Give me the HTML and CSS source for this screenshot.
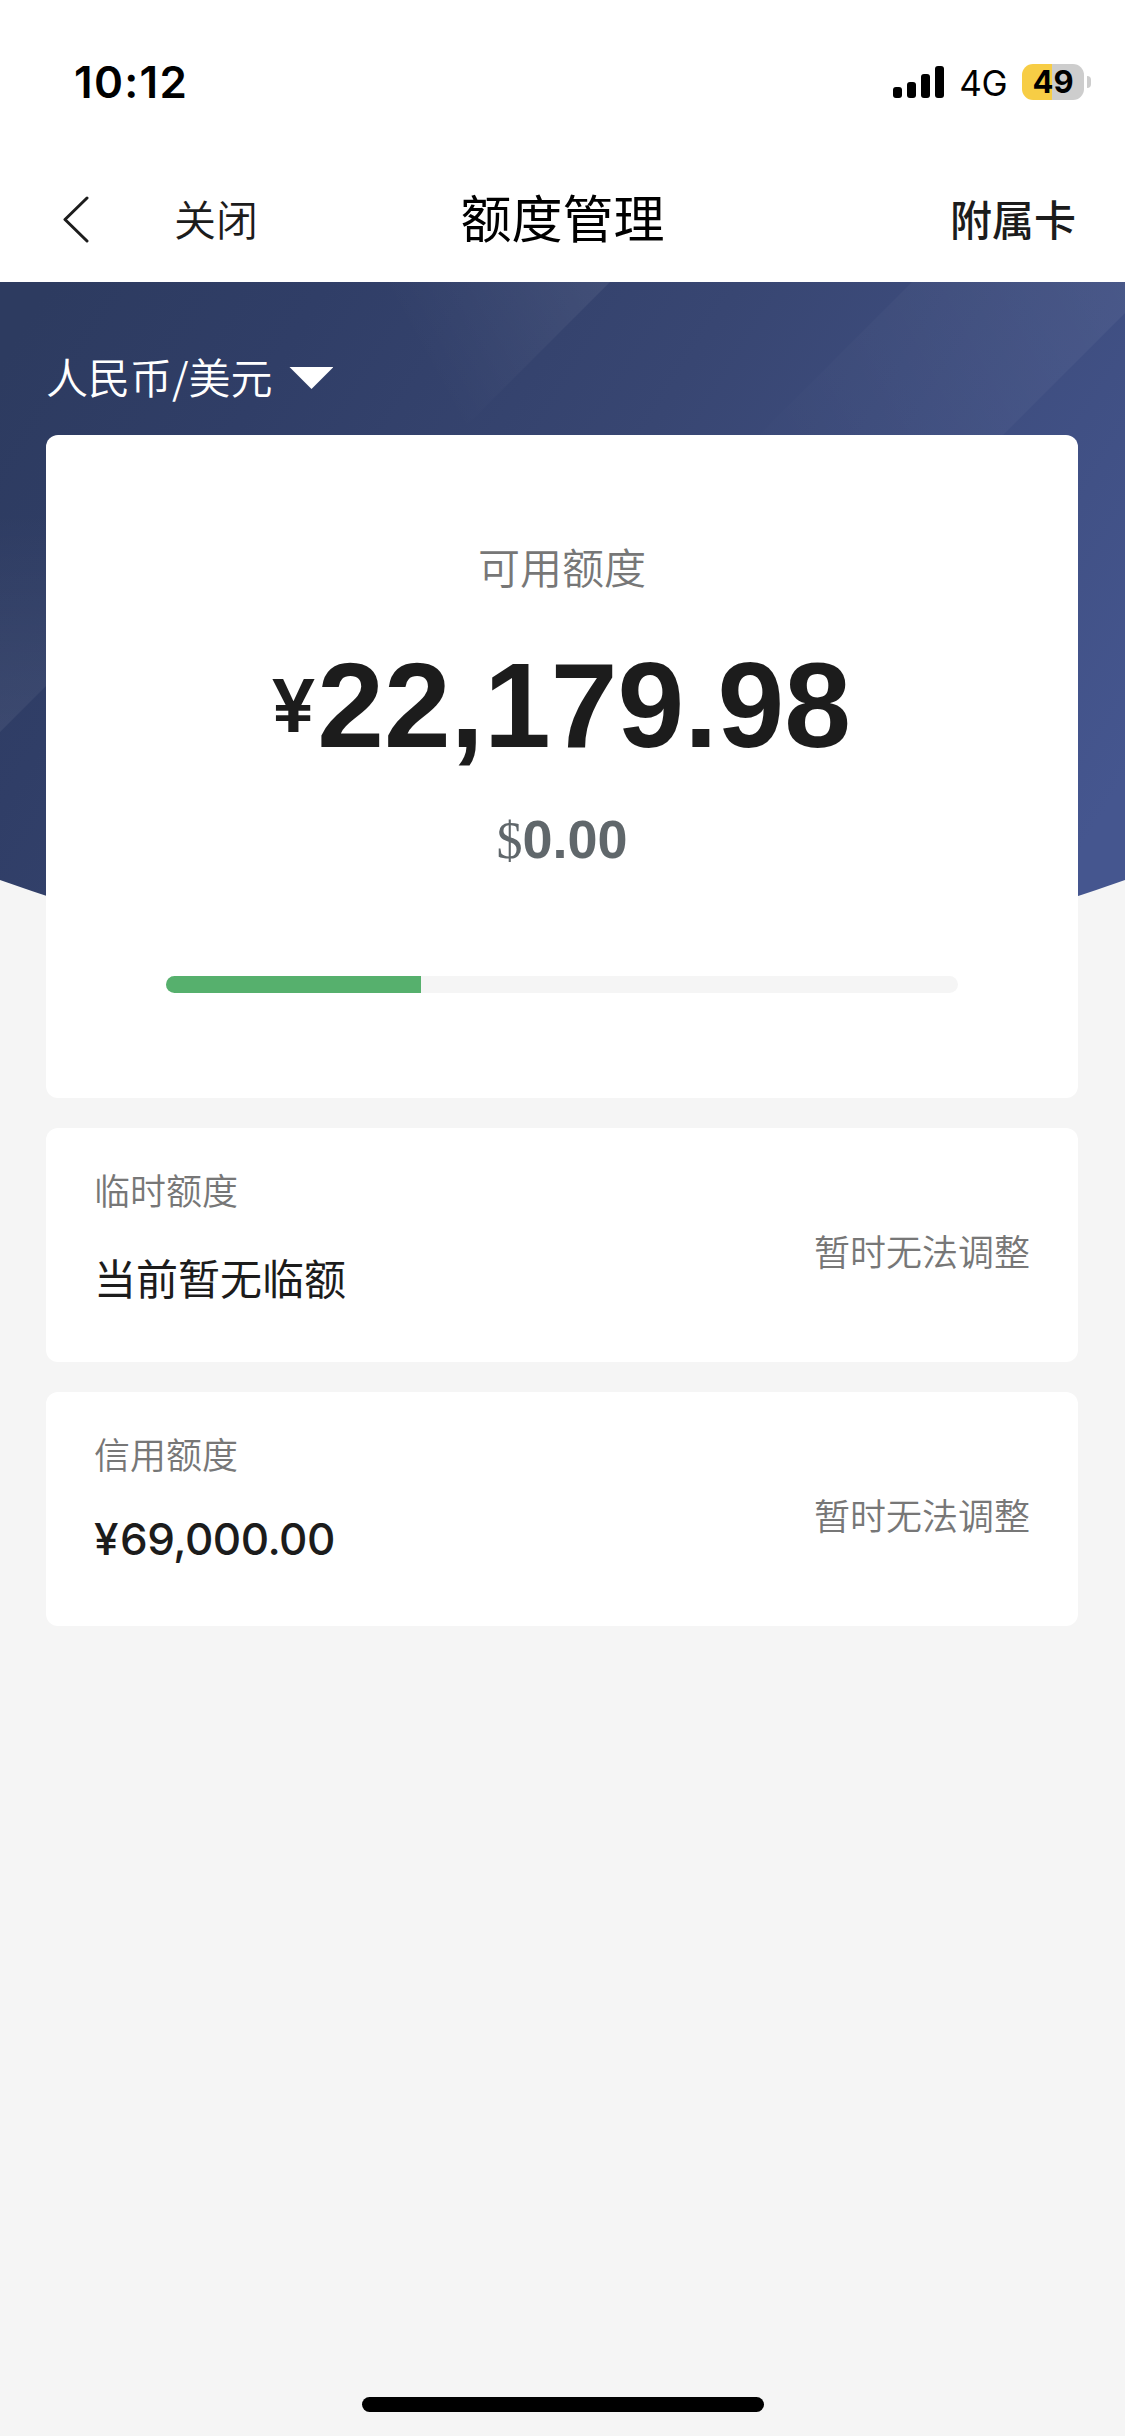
FILE: index.html
```html
<!DOCTYPE html>
<html lang="zh-CN">
<head>
<meta charset="utf-8">
<title>额度管理</title>
<link rel="stylesheet" href="styles.css">
</head>
<body>
<div class="screen">
  <div class="status">
    <div class="time">10:12</div>
    <div class="status-right">
      <svg class="signal" width="51" height="32" viewBox="0 0 51 32"><rect x="0" y="21" width="9" height="11" rx="3"/><rect x="14" y="16" width="9" height="16" rx="3"/><rect x="28" y="8" width="9" height="24" rx="3"/><rect x="42" y="0" width="9" height="32" rx="3"/></svg>
      <div class="network">4G</div>
      <div class="battery"><div class="battery-body">49</div><div class="battery-cap"></div></div>
    </div>
  </div>
  <div class="nav">
    <div class="nav-left">
      <svg class="back" width="28" height="48" viewBox="0 0 28 48"><path d="M25 3 3 24.500 25 46" fill="none" stroke="#1c1c1c" stroke-width="3" stroke-linecap="round" stroke-linejoin="round"/></svg>
      <div class="close">关闭</div>
    </div>
    <div class="title">额度管理</div>
    <div class="sub-card">附属卡</div>
  </div>
  <div class="content">
    <svg class="hero" viewBox="0 282 1125 700" width="1125" height="700">
      <defs>
        <linearGradient id="base" gradientUnits="userSpaceOnUse" x1="50" y1="282" x2="1050" y2="900">
          <stop offset="0" stop-color="#2d3b60"/><stop offset=".2" stop-color="#303e67"/><stop offset=".5" stop-color="#384672"/><stop offset="1" stop-color="#45568f"/>
        </linearGradient>
        <linearGradient id="ray1" gradientUnits="userSpaceOnUse" x1="600" y1="282" x2="430" y2="375">
          <stop offset="0" stop-color="#fff" stop-opacity=".06"/><stop offset="1" stop-color="#fff" stop-opacity="0"/>
        </linearGradient>
        <linearGradient id="ray2" gradientUnits="userSpaceOnUse" x1="1125" y1="282" x2="740" y2="470">
          <stop offset="0" stop-color="#fff" stop-opacity=".05"/><stop offset="1" stop-color="#fff" stop-opacity="0"/>
        </linearGradient>
        <linearGradient id="ray3" gradientUnits="userSpaceOnUse" x1="0" y1="510" x2="0" y2="730">
          <stop offset="0" stop-color="#fff" stop-opacity="0"/><stop offset="1" stop-color="#fff" stop-opacity=".06"/>
        </linearGradient>
      </defs>
      <path d="M0 282H1125V880Q820 988 562 988T0 880Z" fill="url(#base)"/>
      <path d="M200 282H610L420 472H200Z" fill="url(#ray1)"/>
      <path d="M912 282H1125V313L966 472H722Z" fill="url(#ray2)"/>
      <path d="M0 510H80V652L0 732Z" fill="url(#ray3)"/>
    </svg>
    <div class="currency">人民币/美元<span class="caret"></span></div>
    <div class="card main">
      <div class="label">可用额度</div>
      <div class="amount"><span class="yen">¥</span>22,179.98</div>
      <div class="usd"><span class="dollar">$</span>0.00</div>
      <div class="bar"><div class="fill"></div></div>
    </div>
    <div class="card row">
      <div>
        <div class="name">临时额度</div>
        <div class="value">当前暂无临额</div>
      </div>
      <div class="note">暂时无法调整</div>
    </div>
    <div class="card row">
      <div>
        <div class="name">信用额度</div>
        <div class="value money"><span class="sign">¥</span>69,000.00</div>
      </div>
      <div class="note">暂时无法调整</div>
    </div>
  </div>
  <div class="home"></div>
</div>
</body>
</html>
```

FILE: styles.css
```css
* { box-sizing: border-box; }
body { margin: 0; background: #f5f5f5; }
.screen {
  width: 1125px;
  height: 2436px;
  display: flex;
  flex-direction: column;
  background: #f5f5f5;
  color: #1c1c1c;
  font-family: "Noto Sans CJK SC", sans-serif;
  font-weight: 350;
  white-space: nowrap;
  overflow: hidden;
}
.status {
  height: 150px;
  padding: 0 34px 0 74px;
  display: flex;
  justify-content: space-between;
  background: #fff;
  color: #000;
  font-family: Inter, sans-serif;
}
.time { font-size: 44px; line-height: 164px; font-weight: 570; letter-spacing: 1.300px; }
.status-right { display: flex; align-items: center; padding-top: 14px; }
.network { font-size: 35px; line-height: 40px; margin: 2px 15px 0 15px; letter-spacing: -.5px; font-weight: 400; }
.battery { display: flex; align-items: center; gap: 3px; }
.battery-body {
  width: 62px;
  height: 36px;
  border-radius: 11px;
  background: linear-gradient(90deg, #f7cd45 30px, #cdcdcd 30px);
  font-size: 31px;
  line-height: 36px;
  font-weight: 650;
  text-align: center;
}
.battery-cap { width: 4px; height: 12px; border-radius: 0 4px 4px 0; background: #cdcdcd; }
.nav {
  height: 132px;
  padding: 0 49px 0 49px;
  display: grid;
  grid-template-columns: 1fr auto 1fr;
  align-items: center;
  background: #fff;
  font-size: 42px;
}
.nav-left { display: flex; align-items: center; padding-left: 13px; }
.back { margin-top: 6px; }
.close { margin: 3px 0 0 84px; }
.title { font-size: 51px; color: #000; font-weight: 400; }
.sub-card { margin-top: 3px; text-align: right; font-weight: 500; }
.content {
  position: relative;
  flex: 1;
  padding: 0 47px 0 46px;
  display: flex;
  flex-direction: column;
}
.hero { position: absolute; left: 0; top: 0; }
.content > div { position: relative; }
.currency {
  height: 153px;
  padding-top: 64px;
  display: flex;
  align-items: flex-start;
  gap: 17px;
  color: #fff;
  font-size: 42px;
  line-height: 60px;
}
.caret {
  width: 44px;
  height: 22px;
  margin-top: 21px;
  background: #fff;
  clip-path: polygon(0 0, 100% 0, 50% 100%);
}
.card { background: #fff; border-radius: 12px; margin-bottom: 30px; }
.main {
  height: 663px;
  padding-top: 101px;
  display: flex;
  flex-direction: column;
  align-items: center;
}
.label { font-size: 42px; line-height: 60px; color: #777; }
.amount {
  height: 120px;
  margin-top: 49px;
  display: flex;
  font: 700 120px/120px "Liberation Sans", sans-serif;
}
.yen { font: 560 73px/122px Inter, sans-serif; transform: scaleX(1.08); margin-right: 3px; }
.usd {
  display: flex;
  align-items: baseline;
  margin-top: 44px;
  font: 700 54px/60px "Liberation Sans", sans-serif;
  color: #60676b;
}
.dollar { font: 400 52px/60px "Liberation Serif", serif; }
.bar {
  width: 792px;
  height: 17px;
  margin-top: 105px;
  border-radius: 8.5px;
  overflow: hidden;
  background: #f5f5f5;
}
.fill { width: 32.2%; height: 100%; background: #56b06d; }
.row {
  height: 234px;
  padding: 35px 48px 0;
  display: flex;
  justify-content: space-between;
}
.name, .note { font-size: 36px; line-height: 52px; color: #777; }
.value { margin-top: 32px; font-size: 42px; line-height: 60px; font-weight: 400; }
.money { margin-top: 30px; font: 460 44px/60px Inter, sans-serif; letter-spacing: -.5px; }
.sign { margin-right: 2px; }
.note { margin-top: 61px; }
.home {
  width: 402px;
  height: 15px;
  margin: 0 auto 24px 362px;
  border-radius: 8px;
  background: #000;
}
```
